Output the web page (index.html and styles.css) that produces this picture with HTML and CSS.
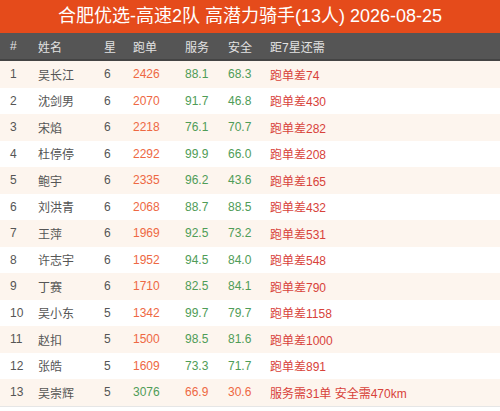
FILE: index.html
```html
<!DOCTYPE html>
<html lang="zh">
<head>
    <meta charset="UTF-8">
    <title>高潜力骑手</title>
    <link rel="stylesheet" href="styles.css">
</head>
<body>
    <div class="title">合肥优选-高速2队 高潜力骑手(13人) 2026-08-25</div>
    <table class="riders">
        <colgroup>
            <col style="width:38px">
            <col style="width:66px">
            <col style="width:29px">
            <col style="width:52px">
            <col style="width:43px">
            <col style="width:42px">
            <col>
        </colgroup>
        <thead>
            <tr><th>#</th><th>姓名</th><th>星</th><th>跑单</th><th>服务</th><th>安全</th><th>距7星还需</th></tr>
        </thead>
        <tbody>
            <tr><td>1</td><td>吴长江</td><td>6</td><td class="bad">2426</td><td class="good">88.1</td><td class="good">68.3</td><td class="need">跑单差74</td></tr>
            <tr><td>2</td><td>沈剑男</td><td>6</td><td class="bad">2070</td><td class="good">91.7</td><td class="good">46.8</td><td class="need">跑单差430</td></tr>
            <tr><td>3</td><td>宋焰</td><td>6</td><td class="bad">2218</td><td class="good">76.1</td><td class="good">70.7</td><td class="need">跑单差282</td></tr>
            <tr><td>4</td><td>杜停停</td><td>6</td><td class="bad">2292</td><td class="good">99.9</td><td class="good">66.0</td><td class="need">跑单差208</td></tr>
            <tr><td>5</td><td>鲍宇</td><td>6</td><td class="bad">2335</td><td class="good">96.2</td><td class="good">43.6</td><td class="need">跑单差165</td></tr>
            <tr><td>6</td><td>刘洪青</td><td>6</td><td class="bad">2068</td><td class="good">88.7</td><td class="good">88.5</td><td class="need">跑单差432</td></tr>
            <tr><td>7</td><td>王萍</td><td>6</td><td class="bad">1969</td><td class="good">92.5</td><td class="good">73.2</td><td class="need">跑单差531</td></tr>
            <tr><td>8</td><td>许志宇</td><td>6</td><td class="bad">1952</td><td class="good">94.5</td><td class="good">84.0</td><td class="need">跑单差548</td></tr>
            <tr><td>9</td><td>丁赛</td><td>6</td><td class="bad">1710</td><td class="good">82.5</td><td class="good">84.1</td><td class="need">跑单差790</td></tr>
            <tr><td>10</td><td>吴小东</td><td>5</td><td class="bad">1342</td><td class="good">99.7</td><td class="good">79.7</td><td class="need">跑单差1158</td></tr>
            <tr><td>11</td><td>赵扣</td><td>5</td><td class="bad">1500</td><td class="good">98.5</td><td class="good">81.6</td><td class="need">跑单差1000</td></tr>
            <tr><td>12</td><td>张皓</td><td>5</td><td class="bad">1609</td><td class="good">73.3</td><td class="good">71.7</td><td class="need">跑单差891</td></tr>
            <tr><td>13</td><td>吴崇辉</td><td>5</td><td class="good">3076</td><td class="bad">66.9</td><td class="bad">30.6</td><td class="need">服务需31单 安全需470km</td></tr>
        </tbody>
    </table>
</body>
</html>
```

FILE: styles.css
```css
body {
    margin: 0;
    background-color: #fff;
    font-family: "Liberation Sans", "Noto Sans CJK SC", sans-serif;
    width: 500px;
}

.title {
    background-color: #e54b1b;
    color: #fff;
    height: 33px;
    line-height: 33px;
    text-align: center;
    font-size: 18px;
}

.riders {
    width: 100%;
    border-collapse: collapse;
    table-layout: fixed;
    font-size: 12px;
    border-bottom: 1px solid #e6e6e6;
}

.riders th {
    background-color: #555;
    color: #e2e2e2;
    font-weight: normal;
    text-align: left;
    height: 26px;
    padding: 0;
    border-bottom: 2px solid #444;
}

.riders td {
    height: 26.5px;
    padding: 0;
    color: #555;
    white-space: nowrap;
}

.riders th:first-child,
.riders td:first-child {
    padding-left: 10px;
}

.riders tbody tr:nth-child(odd) {
    background-color: #fdf5ee;
}

.riders td.bad {
    color: #ee6843;
}

.riders td.good {
    color: #4f9c57;
}

.riders td.need {
    color: #d8423a;
}
```
